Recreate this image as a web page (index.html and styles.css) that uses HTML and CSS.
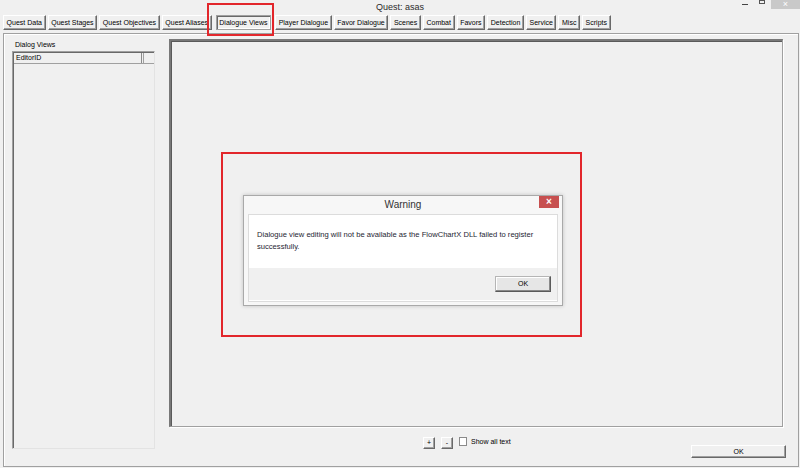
FILE: index.html
```html
<!DOCTYPE html>
<html>
<head>
    <meta charset="utf-8">
    <title>Quest: asas</title>
    <link rel="stylesheet" href="styles.css">
</head>
<body>
    <div class="window">
        <div class="titlebar">
            <span class="title">Quest: asas</span>
            <div class="wincontrols">
                <span class="win-min"></span>
                <span class="win-max"></span>
                <span class="win-close">×</span>
            </div>
        </div>

        <div class="tabs">
            <div class="tab">Quest Data</div>
            <div class="tab">Quest Stages</div>
            <div class="tab">Quest Objectives</div>
            <div class="tab">Quest Aliases</div>
            <div class="tab active">Dialogue Views</div>
            <div class="tab">Player Dialogue</div>
            <div class="tab">Favor Dialogue</div>
            <div class="tab">Scenes</div>
            <div class="tab">Combat</div>
            <div class="tab">Favors</div>
            <div class="tab">Detection</div>
            <div class="tab">Service</div>
            <div class="tab">Misc</div>
            <div class="tab">Scripts</div>
        </div>

        <div class="page">
            <div class="views">
                <div class="views-label">Dialog Views</div>
                <div class="list">
                    <div class="list-head">
                        <span class="col-editor">EditorID</span>
                        <span class="col-rest"></span>
                    </div>
                </div>
            </div>

            <div class="chart-area">
                <div class="chart"></div>
                <div class="chart-bar">
                    <div class="small-btn">+</div>
                    <div class="small-btn">-</div>
                    <label class="check"><span class="check-box"></span>Show all text</label>
                    <div class="btn ok-btn">OK</div>
                </div>
            </div>
        </div>

        <!-- highlight boxes -->
        <div class="mark mark-tab"></div>
        <div class="mark mark-dialog">
            <div class="msgbox">
                <div class="msg-title">
                    Warning
                    <span class="msg-close">×</span>
                </div>
                <div class="msg-body">
                    <div class="msg-text">Dialogue view editing will not be available as the FlowChartX DLL failed to register<br>successfully.</div>
                    <div class="msg-foot">
                        <div class="msg-ok">OK</div>
                    </div>
                </div>
            </div>
        </div>
    </div>
</body>
</html>
```

FILE: styles.css
```css
body {
    margin: 0;
    background-color: #f0f0f0;
    font-family: 'Liberation Sans', Arial, sans-serif;
    font-size: 7px;
    color: #000;
}
.window {
    position: relative;
    width: 800px;
    height: 468px;
    overflow: hidden;
}

/* title bar */
.titlebar {
    position: relative;
    height: 14px;
    display: flex;
    justify-content: center;
    align-items: center;
    font-size: 9px;
    color: #2b2b2b;
}
.wincontrols {
    position: absolute;
    top: 0;
    right: 0;
    display: flex;
    align-items: flex-start;
}
.win-min {
    width: 6px;
    height: 1px;
    margin-top: 4px;
    background-color: #444;
}
.win-max {
    width: 4px;
    height: 2px;
    margin-left: 11px;
    border: 1px solid #555;
    border-top-width: 2px;
    margin-top: -1px;
}
.win-close {
    width: 29px;
    height: 9px;
    margin-left: 6px;
    background-color: #c9c9c9;
    color: #fff;
    font-size: 9px;
    line-height: 8px;
    text-align: center;
}

/* tab buttons */
.tabs {
    display: flex;
    gap: 2px;
    padding-left: 3px;
    margin-top: 1px;
    height: 15px;
}
.tab {
    box-sizing: border-box;
    height: 15px;
    padding: 0 2.6px;
    border: 1px solid;
    border-color: #fff #696969 #696969 #fff;
    box-shadow: inset -1px -1px #a0a0a0;
    line-height: 13px;
    white-space: nowrap;
}
.tab.active {
    margin: 0 2px;
    border-color: #a0a0a0;
    box-shadow: inset 1px 1px #696969, inset -1px -1px #fff;
}

/* tab page */
.page {
    box-sizing: border-box;
    height: 434px;
    margin: 3px 1px 0 3px;
    border: 1px solid #a0a0a0;
    box-shadow: inset 1px 1px #fff;
    display: flex;
}
.views {
    width: 143px;
    margin-left: 8px;
    padding-top: 6px;
}
.views-label {
    height: 10px;
    line-height: 10px;
    padding-left: 3px;
}
.list {
    box-sizing: border-box;
    height: 398px;
    margin-top: 1px;
    border: 1px solid;
    border-color: #a0a0a0 #e3e3e3 #e3e3e3 #a0a0a0;
    box-shadow: inset 1px 1px #696969;
}
.list-head {
    display: flex;
    height: 10px;
    margin: 1px 0 0 1px;
    border-bottom: 1px solid #a0a0a0;
}
.col-editor {
    width: 125px;
    padding-left: 2px;
    line-height: 10px;
    border-right: 1px solid #8a8a8a;
}
.col-rest {
    flex: 1;
    border-left: 1px solid #a0a0a0;
    margin-left: 1px;
}

.chart-area {
    width: 614px;
    margin-left: 14px;
    padding-top: 5px;
    display: flex;
    flex-direction: column;
}
.chart {
    box-sizing: border-box;
    height: 388px;
    border-style: solid;
    border-width: 2px 1px 1px 2px;
    border-color: #787878 #a0a0a0 #a0a0a0 #787878;
    box-shadow: inset 1px 1px #5a5a5a, 1px 1px 0 #fff;
}
.chart-bar {
    display: flex;
    align-items: flex-start;
    padding: 10px 0 0 254px;
    margin-right: -3px;
}
.small-btn {
    box-sizing: border-box;
    width: 12px;
    height: 12px;
    margin-right: 6px;
    border: 1px solid;
    border-color: #fff #696969 #696969 #fff;
    box-shadow: inset -1px -1px #a0a0a0;
    text-align: center;
    line-height: 10px;
}
.check {
    display: flex;
    align-items: center;
    height: 9px;
}
.check-box {
    box-sizing: border-box;
    width: 8px;
    height: 9px;
    margin-right: 4px;
    background-color: #fff;
    border: 1px solid #8a8a8a;
}
.btn {
    box-sizing: border-box;
    border: 1px solid;
    border-color: #fff #696969 #696969 #fff;
    box-shadow: inset -1px -1px #a0a0a0;
    text-align: center;
}
.ok-btn {
    width: 95px;
    height: 13px;
    margin: 8px 0 0 auto;
    line-height: 11px;
}

/* red highlight boxes */
.mark {
    position: absolute;
    box-sizing: border-box;
    border: 2px solid #e2262b;
}
.mark-tab {
    left: 207px;
    top: 3px;
    width: 67px;
    height: 33px;
}
.mark-dialog {
    left: 221px;
    top: 152px;
    width: 361px;
    height: 185px;
    padding: 41px 0 0 20px;
}

/* message box */
.msgbox {
    position: relative;
    box-sizing: border-box;
    width: 320px;
    height: 111px;
    padding: 0 4px 4px 4px;
    background-color: #f7f7f7;
    border: 1px solid #a9a9a9;
    box-shadow: 0 0 4px rgba(0, 0, 0, 0.2);
}
.msg-title {
    height: 18px;
    line-height: 18px;
    text-align: center;
    font-size: 10px;
    color: #333;
}
.msg-close {
    position: absolute;
    top: 0;
    right: 3px;
    width: 20px;
    height: 12px;
    background-color: #c75050;
    color: #fff;
    font-size: 10px;
    line-height: 12px;
    font-weight: bold;
}
.msg-body {
    height: 86px;
    border: 1px solid #dcdcdc;
    background-color: #fff;
}
.msg-text {
    box-sizing: border-box;
    height: 53px;
    padding: 14px 0 0 8px;
    font-size: 7.6px;
    line-height: 12px;
    color: #1e1e32;
    white-space: nowrap;
}
.msg-foot {
    height: 32px;
    background-color: #f0f0f0;
    display: flex;
    justify-content: flex-end;
    padding: 8px 6px 0 0;
    box-sizing: border-box;
}
.msg-ok {
    box-sizing: border-box;
    width: 56px;
    height: 16px;
    border: 1px solid;
    border-color: #b5b5b5 #5a5a5a #5a5a5a #b5b5b5;
    box-shadow: inset -1px -1px #8a8a8a, inset 1px 1px #fff;
    background-color: #e6e6e6;
    text-align: center;
    line-height: 14px;
}
```
